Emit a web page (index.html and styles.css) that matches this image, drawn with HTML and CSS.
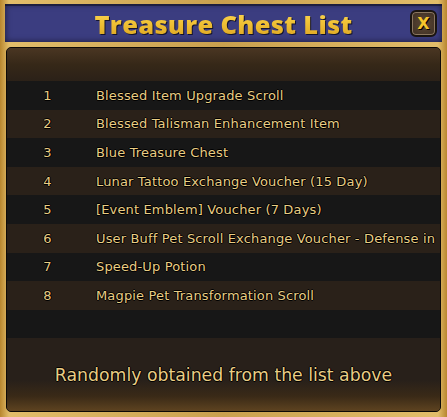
FILE: index.html
```html
<!DOCTYPE html>
<html lang="en">
<head>
    <meta charset="UTF-8">
    <title>Treasure Chest List</title>
    <link rel="stylesheet" href="styles.css">
</head>
<body>
    <div class="window">
        <div class="titlebar">
            <span></span>
            <h1 class="title">Treasure Chest List</h1>
            <div class="close-wrap">
                <div class="close-btn">X</div>
            </div>
        </div>
        <div class="divider"></div>
        <div class="panel">
            <div class="panel-head"></div>
            <div class="row dark"><span class="num">1</span><span class="name">Blessed Item Upgrade Scroll</span></div>
            <div class="row brown"><span class="num">2</span><span class="name">Blessed Talisman Enhancement Item</span></div>
            <div class="row dark"><span class="num">3</span><span class="name">Blue Treasure Chest</span></div>
            <div class="row brown"><span class="num">4</span><span class="name">Lunar Tattoo Exchange Voucher (15 Day)</span></div>
            <div class="row dark"><span class="num">5</span><span class="name">[Event Emblem] Voucher (7 Days)</span></div>
            <div class="row brown"><span class="num">6</span><span class="name">User Buff Pet Scroll Exchange Voucher - Defense in</span></div>
            <div class="row dark"><span class="num">7</span><span class="name">Speed-Up Potion</span></div>
            <div class="row brown"><span class="num">8</span><span class="name">Magpie Pet Transformation Scroll</span></div>
            <div class="row dark"></div>
            <div class="footer">Randomly obtained from the list above</div>
        </div>
    </div>
</body>
</html>
```

FILE: styles.css
```css
body {
    margin: 0;
    background: #000;
    font-family: 'DejaVu Sans', sans-serif;
}

.window {
    width: 447px;
    height: 417px;
    box-sizing: border-box;
    padding: 4px 5px 5px 5px;
    background: linear-gradient(90deg, #b8862e 0%, #e2bd6a 2%, #c9a04e 50%, #e2bd6a 98%, #b8862e 100%);
    display: flex;
    flex-direction: column;
}

.titlebar {
    height: 38px;
    display: grid;
    grid-template-columns: 1fr auto 1fr;
    align-items: center;
    background: #3b3d80;
    box-shadow: inset 0 0 6px rgba(0,0,0,0.6), inset 0 2px 0 rgba(0,0,0,0.35);
}

.title {
    margin: 0;
    font-family: 'Open Sans', sans-serif;
    font-weight: 800;
    font-size: 25.5px;
    letter-spacing: 0.3px;
    color: #f0c43a;
    background: linear-gradient(180deg, #ffe36a 0%, #f2c438 45%, #d69c1c 100%);
    -webkit-background-clip: text;
    background-clip: text;
    -webkit-text-fill-color: transparent;
    filter: drop-shadow(1px 1px 0 #14142e);
    line-height: 38px;
    padding-top: 1px;
}

.close-wrap {
    display: flex;
    justify-content: flex-end;
    padding-right: 5px;
}

.close-btn {
    width: 23px;
    height: 23px;
    border: 2px solid #1a1410;
    border-radius: 6px;
    background: radial-gradient(circle, #5c4634 0%, #3d2f24 100%);
    box-shadow: inset 0 0 0 1px #8b7760;
    color: #f5c62c;
    font-family: 'DejaVu Sans', sans-serif;
    font-weight: bold;
    font-size: 16px;
    line-height: 23px;
    text-align: center;
    text-shadow: 1px 1px 0 #000;
}

.divider {
    height: 5px;
    flex: none;
}

.panel {
    flex: 1;
    margin: 0 1px;
    border: 1px solid #0c0907;
    border-radius: 5px;
    overflow: hidden;
    background: #28201a;
    display: flex;
    flex-direction: column;
}

.panel-head {
    height: 33px;
    background: linear-gradient(180deg, #4a3622 0%, #362818 50%, #2b2118 100%);
}

.row {
    height: 28.6px;
    display: flex;
    align-items: center;
    font-size: 13px;
    letter-spacing: 0.15px;
    color: #e9cd84;
    text-shadow: 1px 0 0 #000, -1px 0 0 #000, 0 1px 0 #000, 0 -1px 0 #000;
    white-space: nowrap;
    overflow: hidden;
}

.dark {
    background: #171717;
}

.brown {
    background: #2a2119;
}

.num {
    width: 33px;
    margin-left: 24px;
    text-align: center;
    flex: none;
}

.name {
    margin-left: 32px;
}

.footer {
    flex: 1;
    display: flex;
    justify-content: center;
    padding-top: 27px;
    box-sizing: border-box;
    font-size: 17.3px;
    color: #e9cd84;
    text-shadow: 1px 0 0 #000, -1px 0 0 #000, 0 1px 0 #000, 0 -1px 0 #000;
    background: linear-gradient(180deg, #28201a 0%, #28201a 58%, #3a2a17 80%, #5e4320 100%);
}
```
